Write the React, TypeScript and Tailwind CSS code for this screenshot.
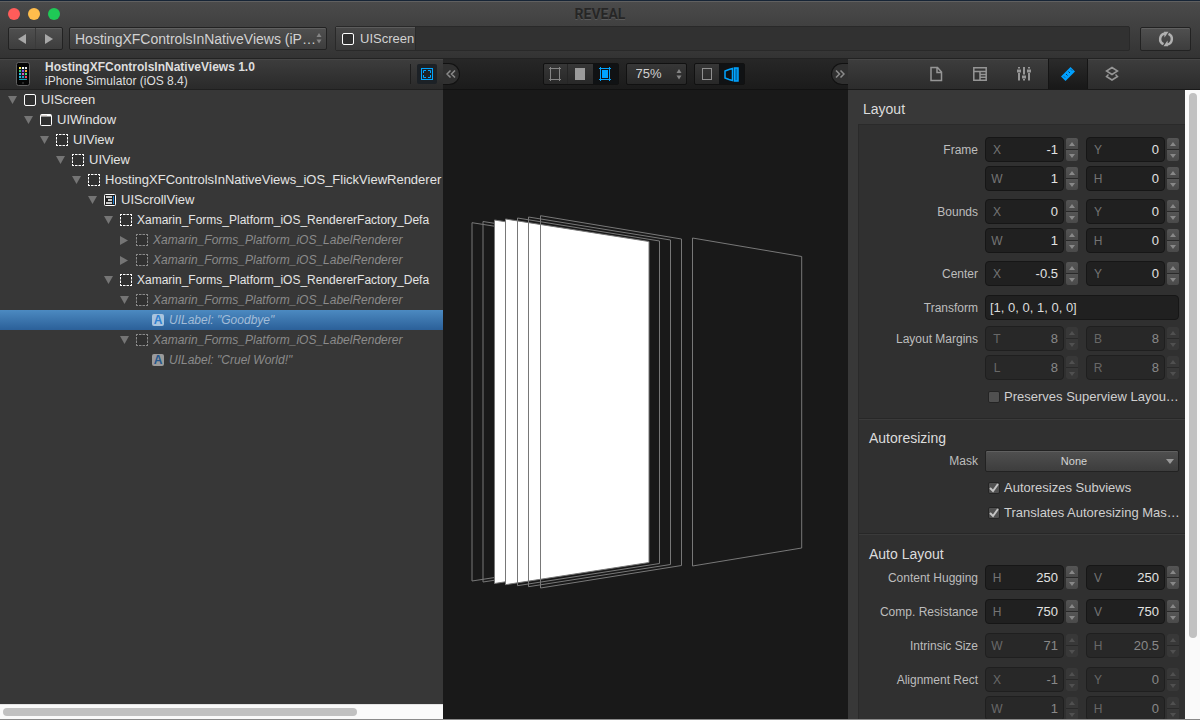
import React, { useState } from 'react';
import clsx from 'clsx';

type IconKind = 'screen' | 'window' | 'view' | 'scroll' | 'label';

interface TreeNode {
  depth: number;
  icon: IconKind;
  text: string;
  state: 'open' | 'closed' | 'leaf';
  dim?: boolean;
}

const nodes: TreeNode[] = [
  { depth: 0, icon: 'screen', text: 'UIScreen', state: 'open' },
  { depth: 1, icon: 'window', text: 'UIWindow', state: 'open' },
  { depth: 2, icon: 'view', text: 'UIView', state: 'open' },
  { depth: 3, icon: 'view', text: 'UIView', state: 'open' },
  { depth: 4, icon: 'view', text: 'HostingXFControlsInNativeViews_iOS_FlickViewRenderer', state: 'open' },
  { depth: 5, icon: 'scroll', text: 'UIScrollView', state: 'open' },
  { depth: 6, icon: 'view', text: 'Xamarin_Forms_Platform_iOS_RendererFactory_Defa', state: 'open' },
  { depth: 7, icon: 'view', text: 'Xamarin_Forms_Platform_iOS_LabelRenderer', state: 'closed', dim: true },
  { depth: 7, icon: 'view', text: 'Xamarin_Forms_Platform_iOS_LabelRenderer', state: 'closed', dim: true },
  { depth: 6, icon: 'view', text: 'Xamarin_Forms_Platform_iOS_RendererFactory_Defa', state: 'open' },
  { depth: 7, icon: 'view', text: 'Xamarin_Forms_Platform_iOS_LabelRenderer', state: 'open', dim: true },
  { depth: 8, icon: 'label', text: 'UILabel: "Goodbye"', state: 'leaf', dim: true },
  { depth: 7, icon: 'view', text: 'Xamarin_Forms_Platform_iOS_LabelRenderer', state: 'open', dim: true },
  { depth: 8, icon: 'label', text: 'UILabel: "Cruel World!"', state: 'leaf', dim: true },
];

function NodeIcon({ kind, dim, selected }: { kind: IconKind; dim?: boolean; selected?: boolean }) {
  const stroke = dim ? '#8a8a8a' : '#ffffff';
  if (kind === 'label') {
    return (
      <span
        aria-hidden="true"
        className={clsx(
          'flex size-3 shrink-0 items-center justify-center rounded-xs text-[12px] leading-3 font-bold not-italic',
          selected ? 'bg-[#a9c4de] text-[#2f7fd0]' : 'bg-[#9a9a9a] text-[#24568c]',
        )}
      >
        A
      </span>
    );
  }
  return (
    <svg width="12" height="12" viewBox="0 0 12 12" className="shrink-0" fill="none" stroke={stroke} aria-hidden="true">
      {kind === 'screen' && <rect x="0.5" y="0.5" width="11" height="11" rx="1.5" fill="#303030" />}
      {kind === 'window' && (
        <>
          <rect x="0.5" y="0.5" width="11" height="11" rx="1" fill="#303030" />
          <path d="M1 1.5h10" strokeWidth="2" />
          <path d="M1.5 1.5h1M3.5 1.5h1M5.5 1.5h1" stroke="#b8a8a0" />
        </>
      )}
      {kind === 'view' && (
        <>
          <rect x="0.5" y="0.5" width="11" height="11" fill="#303030" stroke="none" />
          <path d="M0 .5h2M3 .5h2.500M6.500.5h2.500M10 .5h2M0 11.500h2M3 11.500h2.500M6.500 11.500h2.500M10 11.500h2M.5 0v2M.5 3v2.500M.5 6.500v2.500M.5 10v2M11.500 0v2M11.500 3v2.500M11.500 6.500v2.500M11.500 10v2" />
        </>
      )}
      {kind === 'scroll' && (
        <>
          <rect x="0.5" y="0.5" width="11" height="11" rx="1" fill="#202020" />
          <path d="M2 3h6M4 6h4M2 9h6" strokeWidth="1.5" />
          <path d="M9.5 2v8" stroke="#1a7fd8" />
        </>
      )}
    </svg>
  );
}

function Disclosure({ state }: { state: TreeNode['state'] }) {
  if (state === 'leaf') return <span className="w-2 shrink-0" />;
  return (
    <svg width="8" height="9" viewBox="0 0 8 9" className="shrink-0 overflow-visible" fill="#757575" aria-hidden="true">
      {state === 'open' ? <path d="M0 0h9L4.5 8z" /> : <path d="M0 0v9L8 4.5z" />}
    </svg>
  );
}

function Updown({ className }: { className: string }) {
  return (
    <svg width="6" height="12" viewBox="0 0 6 12" className={className} fill="#858585" aria-hidden="true">
      <path d="M0.5 5 3 1l2.500 4zM0.500 7.500 3 11.500l2.500-4z" />
    </svg>
  );
}

const raised = 'border border-[#222] bg-linear-to-b from-[#505050] to-[#3d3d3d] shadow-[inset_0_1px_0_#606060]';

function Header() {
  return (
    <header className="shrink-0 border-t border-[#172536] border-b border-b-[#222] bg-linear-to-b from-[#4b4b4b] to-[#333]">
      <div className="relative flex h-[25px] items-center justify-center border-t border-[#606060]">
        <div className="absolute left-2 flex gap-2">
          <button aria-label="Close" className="size-3 rounded-full bg-[#ff5c5a]" />
          <button aria-label="Minimize" className="size-3 rounded-full bg-[#ffbd4c]" />
          <button aria-label="Zoom" className="size-3 rounded-full bg-[#1fc956]" />
        </div>
        <h1 className="font-[Roboto,sans-serif] text-[14px] leading-4 font-bold text-[#262626] [text-shadow:0_1px_0_#5a5a5a]">
          REVEAL
        </h1>
      </div>
      <div className="flex h-8 items-start px-2">
        <div className={clsx('mt-px flex h-[23px] w-[55px] shrink-0 rounded-xs', raised)}>
          <button aria-label="Back" className="flex flex-1 items-center justify-center border-r border-[#3a3a3a]">
            <svg width="8" height="10" viewBox="0 0 8 10" fill="#a8a8a8"><path d="M8 0v10L0 5z" /></svg>
          </button>
          <button aria-label="Forward" className="flex flex-1 items-center justify-center">
            <svg width="8" height="10" viewBox="0 0 8 10" fill="#a8a8a8"><path d="M0 0v10l8-5z" /></svg>
          </button>
        </div>
        <div className={clsx('relative mt-px ml-1.5 h-[23px] w-[258px] shrink-0 rounded-xs', raised)}>
          <select aria-label="Application" className="block h-full w-full appearance-none pl-[5px] text-[14px] leading-5 text-[#d2d2d2]">
            <option>HostingXFControlsInNativeViews (iP…</option>
          </select>
          <Updown className="pointer-events-none absolute top-1 right-1" />
        </div>
        <nav aria-label="Path" className="ml-2 flex h-[25px] flex-1 rounded-xs border border-[#292929] bg-[#313131]">
          <a href="#screen" className="flex w-20 items-center gap-1.5 border-r border-[#2a2a2a] bg-linear-to-b from-[#484848] to-[#393939] pl-1.5 text-[13px] text-[#d2d2d2] shadow-[inset_0_1px_0_#5c5c5c]">
            <NodeIcon kind="screen" />
            UIScreen
          </a>
        </nav>
        <button aria-label="Refresh" className={clsx('mt-px mr-px ml-2.5 flex h-6 w-[51px] shrink-0 items-center justify-center rounded-xs', raised)}>
          <svg width="16" height="16" viewBox="0 0 16 16" fill="none" stroke="#b0b0b0" strokeWidth="2.500">
            <path d="M5.500 13.200A5.700 5.700 0 0 1 6.800 2.400M10.500 2.800A5.700 5.700 0 0 1 9.200 13.600" />
            <path d="M6 0.800h4.500L6.500 6.500zM10 15.200H5.500L9.500 9.500z" fill="#b0b0b0" stroke="none" />
          </svg>
        </button>
      </div>
    </header>
  );
}

function PhoneIcon() {
  const colors = ['#fff04a', '#fff', '#e8e8e8', '#35d46a', '#8d52e8', '#f59c2c', '#22c4ea', '#e255b6', '#4fe070', '#27b6dd', '#1fa0cc', '#ee4565'];
  return (
    <svg width="14" height="24" viewBox="0 0 14 24" className="shrink-0" aria-hidden="true">
      <rect x="0.500" y="0.500" width="13" height="23" rx="2" fill="#050505" stroke="#606060" />
      <rect x="3" y="5" width="8" height="13" fill="#141e28" />
      {colors.map((c, i) => (
        <rect key={i} x={3 + (i % 3) * 3} y={5 + Math.floor(i / 3) * 3} width="2" height="2" fill={c} />
      ))}
      <path d="M3 17.500h8" stroke="#15a0b5" />
      <circle cx="7" cy="21" r="1" fill="#333" />
    </svg>
  );
}

function Outline() {
  const [selected, setSelected] = useState(11);
  return (
    <section aria-label="Hierarchy" className="flex w-[443px] shrink-0 flex-col bg-[#373737]">
      <div className="flex h-[31px] shrink-0 items-center border-b border-[#1f1f1f] bg-linear-to-b from-[#3d3d3d] to-[#2a2a2a] pr-1.5 pl-4 shadow-[inset_0_1px_0_#464646]">
        <PhoneIcon />
        <div className="ml-[15px] flex-1 leading-[14px] text-[#dedede]">
          <div className="text-[12px] leading-[14px] font-bold">HostingXFControlsInNativeViews 1.0</div>
          <div className="text-[12px] leading-[14px]">iPhone Simulator (iOS 8.4)</div>
        </div>
        <div className="flex border-l border-[#1d1d1d] pl-1.5">
          <button aria-label="Fit selection" className="flex size-5 items-center justify-center rounded-xs bg-[#1c2126]">
            <svg width="12" height="12" viewBox="0 0 12 12" fill="none" stroke="#00a4ff">
              <rect x="0.500" y="0.500" width="11" height="11" />
              <path d="M2.500 5V2.500H5M7 2.500h2.500V5M9.500 7v2.500H7M5 9.500H2.500V7" />
            </svg>
          </button>
        </div>
      </div>
      <ul role="tree" className="min-h-0 flex-1 overflow-hidden leading-5">
        {nodes.map((n, i) => (
          <li key={i} role="treeitem" aria-selected={i === selected}>
            <button
              onClick={() => setSelected(i)}
              className={clsx(
                'flex h-5 w-full items-center gap-2 whitespace-nowrap',
                n.depth > 5 ? 'text-[12px]' : 'text-[13px]',
                n.dim ? 'italic' : 'text-[#e4e4e4]',
                n.dim && (i === selected ? 'text-[#a3bdd8]' : 'text-[#8b8b8b]'),
                i === selected && 'bg-linear-to-b from-[#4c8ac1] to-[#2b6099]',
              )}
              style={{ paddingLeft: 8 + n.depth * 16 }}
            >
              <Disclosure state={n.state} />
              <NodeIcon kind={n.icon} dim={n.dim} selected={i === selected} />
              <span className="-ml-[3px]">{n.text}</span>
            </button>
          </li>
        ))}
      </ul>
      <div className="h-[15px] shrink-0 border-t border-[#e4e4e4] bg-[#fafafa] px-[3px] pt-[3px]">
        <div className="h-2 w-[81%] rounded-full bg-[#c1c1c1]" />
      </div>
    </section>
  );
}

const sheets = [
  { d: 'M472 222.700L615 245V559L472 581z', fill: 'none' },
  { d: 'M483 221.500L626 244V560L483 582z', fill: 'none' },
  { d: 'M494.500 220L638 243V561L494.500 583.500z', fill: '#fff' },
  { d: 'M505.500 219L649 241.500V562.500L505.500 584.700z', fill: '#fff' },
  { d: 'M517.500 218L659.500 241V563.500L517.500 585.700z', fill: 'none' },
  { d: 'M528.500 217L670.500 240V564.500L528.500 586.700z', fill: 'none' },
  { d: 'M540.500 215.700L681.500 239V565.500L540.500 588z', fill: 'none' },
  { d: 'M692.500 238L801.700 256.500V548L692.500 566z', fill: 'none' },
];

function Canvas() {
  return (
    <main className="flex min-w-0 flex-1 flex-col bg-[#191919]">
      <div className="flex h-[31px] shrink-0 items-center justify-between border-b border-[#111] bg-linear-to-b from-[#272727] to-[#1b1b1b]">
        <button aria-label="Collapse left" className="flex h-[22px] w-[17px] items-center justify-center rounded-r-full border border-l-0 border-[#111] bg-[#303030]">
          <svg width="10" height="8" viewBox="0 0 10 8" fill="none" stroke="#8b8b8b" strokeWidth="1.500"><path d="M4.500.5 1 4l3.500 3.500M9 .5 5.500 4 9 7.500" /></svg>
        </button>
        <div className="flex gap-[7px] pr-1">
          <div className="flex h-[22px] rounded-xs border border-[#111] bg-linear-to-b from-[#373737] to-[#282828]">
            <button aria-label="Wireframe" className="flex w-6 items-center justify-center border-r border-[#252525]">
              <svg width="12" height="14" viewBox="0 0 12 14" fill="none" stroke="#858585"><path d="M0 1.500h12M0 12.500h12M1.500 0v14M10.500 0v14" /></svg>
            </button>
            <button aria-label="Contents" className="flex w-[25px] items-center justify-center">
              <svg width="10" height="12" viewBox="0 0 10 12"><rect width="10" height="12" fill="#9b9b9b" /></svg>
            </button>
            <button aria-label="Wireframe and contents" className="flex w-[25px] items-center justify-center bg-[#101214]">
              <svg width="12" height="14" viewBox="0 0 12 14" fill="none" stroke="#00a4ff"><path d="M0 1.500h12M0 12.500h12M1.500 0v14M10.500 0v14" /><path d="M3 3h6v8H3z" fill="#00a4ff" stroke="none" /></svg>
            </button>
          </div>
          <div className="relative h-[22px] w-[61px] rounded-xs border border-[#111] bg-linear-to-b from-[#373737] to-[#282828]">
            <select aria-label="Zoom level" className="block h-full w-full appearance-none pl-[9px] text-[13px] leading-4 text-[#d0d0d0]">
              <option>75%</option>
            </select>
            <Updown className="pointer-events-none absolute top-1 right-1" />
          </div>
          <div className="flex h-[22px] rounded-xs border border-[#111] bg-linear-to-b from-[#373737] to-[#282828]">
            <button aria-label="2D" className="flex w-6 items-center justify-center">
              <svg width="10" height="12" viewBox="0 0 10 12" fill="none" stroke="#909090"><rect x="0.500" y="0.500" width="9" height="11" /></svg>
            </button>
            <button aria-label="3D" className="flex w-[25px] items-center justify-center bg-[#101214]">
              <svg width="15" height="15" viewBox="0 0 15 15" fill="none" stroke="#00a4ff" strokeWidth="1.500">
                <path d="M5 2.500 1 4v7l4 1.500M5 2.500 8.500 1.500v12L5 12.500" />
                <path d="M10.500 1H14v13h-3.500z" fill="#006fb0" />
              </svg>
            </button>
          </div>
        </div>
        <button aria-label="Collapse right" className="flex h-[22px] w-[17px] items-center justify-center rounded-l-full border border-r-0 border-[#111] bg-[#303030]">
          <svg width="10" height="8" viewBox="0 0 10 8" fill="none" stroke="#8b8b8b" strokeWidth="1.500"><path d="M1 .5 4.500 4 1 7.500M5.500.5 9 4 5.500 7.500" /></svg>
        </button>
      </div>
      <svg viewBox="443 90 405 629" className="min-h-0 w-full flex-1" stroke="#787878" role="img" aria-label="Exploded view layers">
        {sheets.map((s) => (
          <path key={s.d} d={s.d} fill={s.fill} />
        ))}
      </svg>
    </main>
  );
}

function Stepper({ name, disabled }: { name: string; disabled?: boolean }) {
  const fill = disabled ? '#505050' : '#888888';
  const tone = disabled ? 'bg-[#383838]' : 'bg-linear-to-b from-[#555] to-[#4a4a4a]';
  return (
    <span className="ml-0.5 flex h-[23px] w-3 shrink-0 flex-col gap-px overflow-hidden rounded-xs bg-[#292929]">
      <button disabled={disabled} aria-label={`Increase ${name}`} className={clsx('flex flex-1 items-center justify-center', tone)}>
        <svg width="6" height="4" viewBox="0 0 6 4" fill={fill}><path d="M0 4 3 0l3 4z" /></svg>
      </button>
      <button disabled={disabled} aria-label={`Decrease ${name}`} className={clsx('flex flex-1 items-center justify-center', tone)}>
        <svg width="6" height="4" viewBox="0 0 6 4" fill={fill}><path d="M0 0l3 4 3-4z" /></svg>
      </button>
    </span>
  );
}

function Field({ group, letter, value, disabled }: { group: string; letter: string; value: string; disabled?: boolean }) {
  const id = `${group}-${letter}`.toLowerCase().replace(/[^a-z]+/g, '-');
  return (
    <div className="flex min-w-0 flex-1 items-center">
      <div className={clsx('flex h-[25px] min-w-0 flex-1 items-center rounded-sm border px-[5px]', disabled ? 'border-[#1f1f1f] bg-[#282828]' : 'border-[#161616] bg-[#202020]')}>
        <label htmlFor={id} className={clsx('w-3 text-center text-[12px]', disabled ? 'text-[#686868]' : 'text-[#747474]')}>{letter}</label>
        <input
          id={id}
          defaultValue={value}
          disabled={disabled}
          className={clsx('w-full min-w-0 flex-1 bg-transparent text-right text-[13px] outline-none', disabled ? 'text-[#888]' : 'text-[#e2e2e2]')}
        />
      </div>
      <Stepper name={`${group} ${letter}`} disabled={disabled} />
    </div>
  );
}

function Row({ label, className, children }: { label?: string; className?: string; children: React.ReactNode }) {
  return (
    <div className={clsx('flex items-center gap-[7px]', className)}>
      <span className="w-[119px] shrink-0 text-right text-[12px] leading-[14px] text-[#bdbdbd]">{label}</span>
      {children}
    </div>
  );
}

function Pair({ label, group, a, b, disabled, className }: { label?: string; group: string; a: [string, string]; b: [string, string]; disabled?: boolean; className?: string }) {
  return (
    <Row label={label} className={className}>
      <div className="flex min-w-0 flex-1 gap-2">
        <Field group={group} letter={a[0]} value={a[1]} disabled={disabled} />
        <Field group={group} letter={b[0]} value={b[1]} disabled={disabled} />
      </div>
    </Row>
  );
}

function Check({ text, checked, className }: { text: string; checked?: boolean; className?: string }) {
  return (
    <Row className={className}>
      <label className="flex items-center gap-1 pl-[3px] text-[13px] leading-4 whitespace-nowrap text-[#cfcfcf]">
        <span className="relative flex size-3">
          <input type="checkbox" defaultChecked={checked} className="peer size-3 appearance-none rounded-xs border border-[#242424] bg-[#505050]" />
          <svg viewBox="0 0 12 12" className="pointer-events-none absolute inset-0 hidden peer-checked:block" fill="none" stroke="#c4c4c4" strokeWidth="2">
            <path d="M2 6l3 3 5-7" />
          </svg>
        </span>
        {text}
      </label>
    </Row>
  );
}

const tabs = [
  { name: 'File', icon: <path d="M3 1.500h6.500L13.500 6v8.500H3zM9 1.500V6.500h4.500" strokeWidth="1.500" /> },
  { name: 'Identity', icon: <path d="M1.800 1.800h12.400v12.400H1.800zM1.800 5.500h12.400M8 5.500v8.700M8 8.500h6M8 11.300h6" strokeWidth="1.500" /> },
  {
    name: 'Attributes',
    icon: (
      <>
        <path d="M3 1v1.500M3 7v7.500M8 1v7.500M8 13v1.500M13 1v1.500M13 7v7.500" strokeWidth="2" />
        <path d="M1 5h4M6 11h4M11 5h4" strokeWidth="3" />
      </>
    ),
  },
  {
    name: 'Layout',
    icon: (
      <>
        <path d="M10.500 1 15 5.500 5.500 15 1 10.500z" fill="#00a0ff" stroke="none" />
        <path d="M6 8l1.500 1.500M8.500 5.500l1.500 1.500M11 3.500l1 1M4 10.500l1 1" stroke="#123754" />
      </>
    ),
  },
  { name: 'Layers', icon: <path d="M8 1.500 13.500 5 8 8.500 2.500 5zM4.500 8.500 2.500 10.500 8 14l5.500-3.500-2-2" strokeWidth="1.500" /> },
];

function Inspector() {
  return (
    <aside aria-label="Inspector" className="flex w-[352px] shrink-0 flex-col bg-[#383838]">
      <div role="tablist" className="flex h-[31px] shrink-0 justify-center gap-1 border-b border-[#191919] bg-linear-to-b from-[#3d3d3d] to-[#2c2c2c] shadow-[inset_0_1px_0_#464646]">
        {tabs.map((t) => (
          <button
            key={t.name}
            role="tab"
            aria-label={t.name}
            aria-selected={t.name === 'Layout'}
            className={clsx('flex w-10 items-center justify-center', t.name === 'Layout' && 'border-x border-[#151515] bg-linear-to-b from-[#2b2b2b] to-[#181818]')}
          >
            <svg width="16" height="16" viewBox="0 0 16 16" fill="none" stroke="#969696">{t.icon}</svg>
          </button>
        ))}
      </div>
      <div className="flex min-h-0 flex-1">
        <div className="flex min-w-0 flex-1 flex-col overflow-hidden pl-2.5">
          <h2 className="flex h-[34px] shrink-0 items-center pt-1 pl-[5px] text-[14px] leading-4 text-[#dcdcdc]">
            <span>Layout</span>
          </h2>
          <div className="border-t border-l border-[#2a2a2a] bg-[#303030]">
            <section aria-label="Layout" className="border-b border-[#272727] pt-3 pr-1.5 pb-[13px]">
              <Pair label="Frame" group="Frame" a={['X', '-1']} b={['Y', '0']} />
              <Pair group="Frame" a={['W', '1']} b={['H', '0']} className="mt-1" />
              <Pair label="Bounds" group="Bounds" a={['X', '0']} b={['Y', '0']} className="mt-2" />
              <Pair group="Bounds" a={['W', '1']} b={['H', '0']} className="mt-1" />
              <Pair label="Center" group="Center" a={['X', '-0.5']} b={['Y', '0']} className="mt-2" />
              <Row label="Transform" className="mt-[9px]">
                <input aria-label="Transform" defaultValue="[1, 0, 0, 1, 0, 0]" className="h-[25px] min-w-0 flex-1 rounded-sm border border-[#161616] bg-[#202020] px-1 text-[13px] text-[#dcdcdc] outline-none" />
              </Row>
              <Pair label="Layout Margins" group="Margins" a={['T', '8']} b={['B', '8']} disabled className="mt-1.5" />
              <Pair group="Margins" a={['L', '8']} b={['R', '8']} disabled className="mt-1" />
              <Check text="Preserves Superview Layou…" className="mt-[9px]" />
            </section>
            <section aria-label="Autoresizing" className="border-t border-b border-[#3a3a3a] border-b-[#272727] pt-2.5 pr-1.5 pb-3">
              <h3 className="pl-2.5 text-[14px] leading-4 text-[#dcdcdc]">Autoresizing</h3>
              <Row label="Mask" className="mt-1">
                <div className={clsx('relative h-[22px] min-w-0 flex-1 rounded-xs', raised)}>
                  <select aria-label="Mask" className="block h-full w-full appearance-none pr-4 text-center text-[11px] leading-4 text-[#d4d4d4] [text-align-last:center]">
                    <option>None</option>
                  </select>
                  <svg width="8" height="5" viewBox="0 0 8 5" className="pointer-events-none absolute top-2 right-1" fill="#999"><path d="M0 0h8L4 5z" /></svg>
                </div>
              </Row>
              <Check text="Autoresizes Subviews" checked className="mt-2" />
              <Check text="Translates Autoresizing Mas…" checked className="mt-[9px]" />
            </section>
            <section aria-label="Auto Layout" className="border-t border-[#3a3a3a] pt-[11px] pr-1.5 pb-3">
              <h3 className="pl-2.5 text-[14px] leading-4 text-[#dcdcdc]">Auto Layout</h3>
              <Pair label="Content Hugging" group="Hugging" a={['H', '250']} b={['V', '250']} className="mt-[3px]" />
              <Pair label="Comp. Resistance" group="Resistance" a={['H', '750']} b={['V', '750']} className="mt-[9px]" />
              <Pair label="Intrinsic Size" group="Intrinsic" a={['W', '71']} b={['H', '20.5']} disabled className="mt-[9px]" />
              <Pair label="Alignment Rect" group="Alignment" a={['X', '-1']} b={['Y', '0']} disabled className="mt-[9px]" />
              <Pair group="Alignment" a={['W', '1']} b={['H', '0']} disabled className="mt-1" />
            </section>
          </div>
        </div>
        <div className="flex w-[15px] shrink-0 flex-col items-center bg-[#fafafa] pt-[3px]">
          <div className="h-[87%] w-2 rounded-full bg-[#c1c1c1]" />
        </div>
      </div>
    </aside>
  );
}

export default function App() {
  return (
    <div className="flex h-screen flex-col overflow-hidden border-b border-[#8a8a8a] bg-[#191919] font-['Liberation_Sans',sans-serif]">
      <Header />
      <div className="flex min-h-0 flex-1">
        <Outline />
        <Canvas />
        <Inspector />
      </div>
    </div>
  );
}
